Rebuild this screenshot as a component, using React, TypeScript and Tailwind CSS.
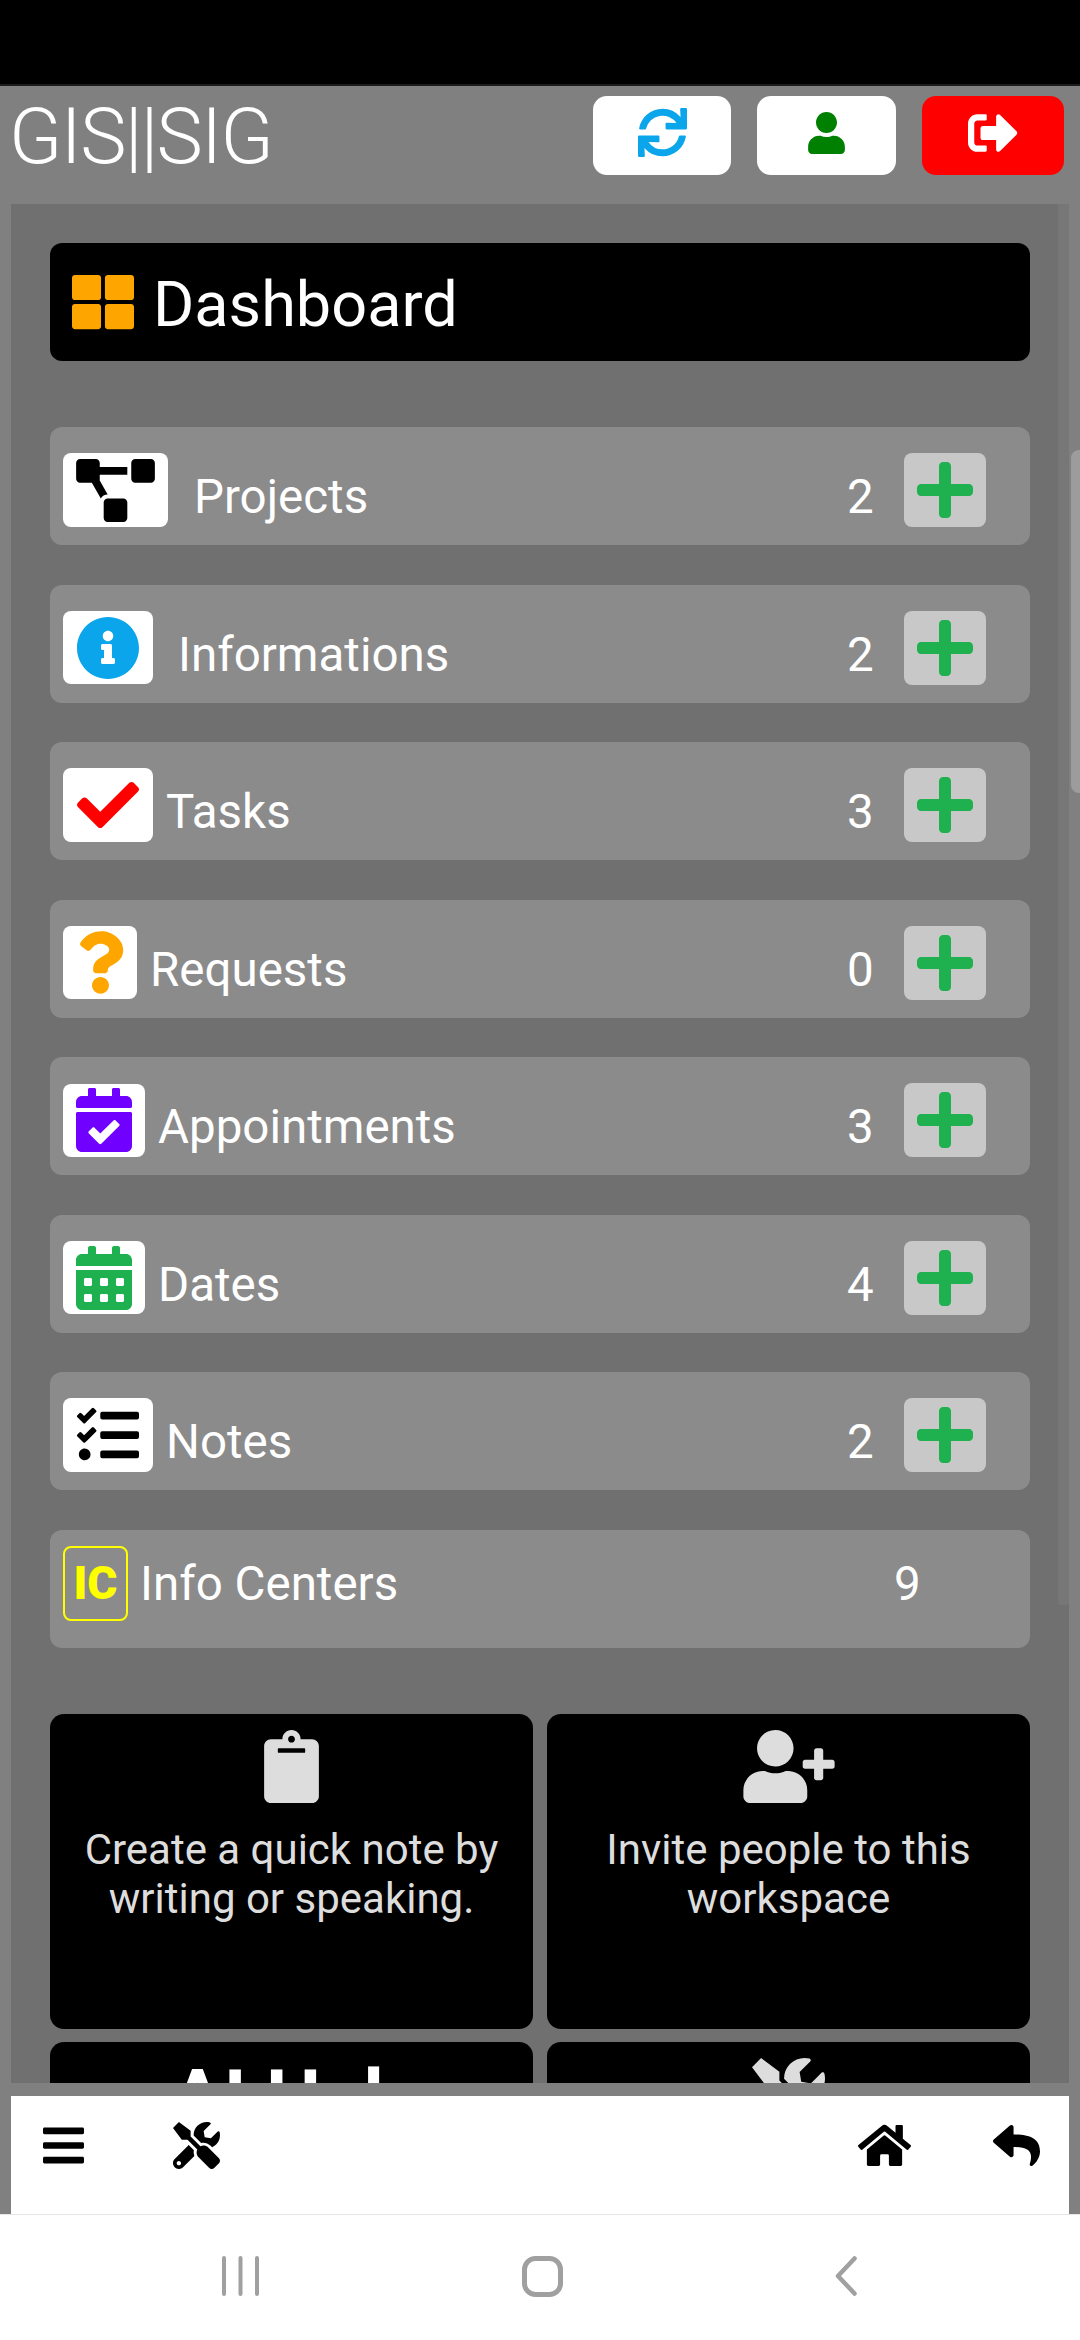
import type { ReactNode } from "react";
import {
  FaBars,
  FaCalendarAlt,
  FaCalendarCheck,
  FaCheck,
  FaClipboard,
  FaHome,
  FaInfoCircle,
  FaPlus,
  FaProjectDiagram,
  FaQuestion,
  FaReply,
  FaSignOutAlt,
  FaSync,
  FaTasks,
  FaThLarge,
  FaTools,
  FaUser,
  FaUserPlus,
} from "react-icons/fa";

interface Section {
  name: string;
  count: number;
  icon: ReactNode;
  tile: string;
  label: string;
}

const sections: Section[] = [
  {
    name: "Projects",
    count: 2,
    icon: <FaProjectDiagram className="w-[79px] h-[63px] text-black" />,
    tile: "w-[105px] h-[74px]",
    label: "ml-[26px]",
  },
  {
    name: "Informations",
    count: 2,
    icon: <FaInfoCircle className="w-[64px] h-[64px] text-[#0ba5ec]" />,
    tile: "w-[90px] h-[73px]",
    label: "ml-[25px]",
  },
  {
    name: "Tasks",
    count: 3,
    icon: <FaCheck className="w-[62px] h-[62px] text-[#ff0000]" />,
    tile: "w-[90px] h-[74px]",
    label: "ml-[13px]",
  },
  {
    name: "Requests",
    count: 0,
    icon: <FaQuestion className="w-[47px] h-[63px] text-[#ffa500]" />,
    tile: "w-[74px] h-[73px]",
    label: "ml-[13px]",
  },
  {
    name: "Appointments",
    count: 3,
    icon: <FaCalendarCheck className="w-[56px] h-[64px] text-[#7000ff]" />,
    tile: "w-[82px] h-[73px]",
    label: "ml-[13px]",
  },
  {
    name: "Dates",
    count: 4,
    icon: <FaCalendarAlt className="w-[56px] h-[64px] text-[#1fb14f]" />,
    tile: "w-[82px] h-[73px]",
    label: "ml-[13px]",
  },
  {
    name: "Notes",
    count: 2,
    icon: <FaTasks className="w-[62px] h-[62px] text-black" />,
    tile: "w-[90px] h-[74px]",
    label: "ml-[13px]",
  },
];

function SectionRow({ section }: { section: Section }) {
  return (
    <div className="flex h-[118px] items-center rounded-[12px] bg-[#8b8b8b] pl-[13px] pr-[44px] pt-[8px]">
      <div className={`flex items-center justify-center rounded-[8px] bg-white ${section.tile}`}>
        {section.icon}
      </div>
      <span className={`flex-1 pt-[14px] text-[47.5px] leading-[54px] text-white ${section.label}`}>
        {section.name}
      </span>
      <span className="w-[26px] pt-[14px] text-center text-[47.5px] leading-[54px] text-white">
        {section.count}
      </span>
      <button className="ml-[31px] flex h-[74px] w-[82px] items-center justify-center rounded-[8px] bg-[#c8c8c8]">
        <FaPlus className="h-[64px] w-[56px] text-[#1fb14f]" />
      </button>
    </div>
  );
}

function ActionCard({ icon, children }: { icon: ReactNode; children: ReactNode }) {
  return (
    <div className="flex h-[315px] flex-col items-center rounded-[14px] bg-black pt-[16px] text-center text-[#dddddd]">
      {icon}
      <p className="mt-[22px] px-[30px] text-[42px] leading-[49px]">{children}</p>
    </div>
  );
}

export default function App() {
  return (
    <div className="flex h-[2340px] w-[1080px] flex-col overflow-hidden bg-[#808080] font-['Roboto',sans-serif]">
      {/* status bar */}
      <div className="h-[86px] shrink-0 border-b-2 border-[#1c1c1c] bg-black" />

      <header className="flex h-[118px] shrink-0 items-start justify-between pl-[9px] pr-[16px] pt-[10px]">
        <h1 className="mt-[-9px] text-[78px] font-[350] leading-[100px] tracking-[-1.5px] text-white">GIS||SIG</h1>
        <div className="flex gap-[26px]">
          <button className="flex h-[79px] w-[138px] items-center justify-center rounded-[14px] bg-white pb-[6px]">
            <FaSync className="h-[49px] w-[49px] text-[#0ba5ec]" />
          </button>
          <button className="flex h-[79px] w-[139px] items-center justify-center rounded-[14px] bg-white pb-[5px]">
            <FaUser className="h-[42px] w-[37px] text-[#008000]" />
          </button>
          <button className="flex h-[79px] w-[142px] items-center justify-center rounded-[14px] bg-[#ff0000] pb-[6px]">
            <FaSignOutAlt className="h-[50px] w-[50px] text-white" />
          </button>
        </div>
      </header>

      <div className="relative mx-[11px] h-[1879px] shrink-0 overflow-hidden bg-[#707070]">
        <div className="flex flex-col pl-[39px] pt-[39px] w-[1019px]">
          <div className="flex h-[118px] items-center rounded-[12px] bg-black pl-[22px]">
            <FaThLarge className="h-[62px] w-[62px] text-[#ffa500]" />
            <span className="ml-[19px] pt-[5px] text-[63px] leading-[72px] text-white">Dashboard</span>
          </div>

          <div className="mt-[66px] flex flex-col gap-[39.5px]">
            {sections.map((section) => (
              <SectionRow key={section.name} section={section} />
            ))}
            <div className="flex h-[118px] items-center rounded-[12px] bg-[#8b8b8b] pb-[10px] pl-[13px] pr-[110px]">
              <div className="flex h-[75px] w-[65px] items-center justify-center rounded-[8px] border-2 border-[#ffff00] text-[46px] font-black text-[#ffff00]">
                IC
              </div>
              <span className="ml-[12px] flex-1 text-[47.5px] leading-[54px] text-white">Info Centers</span>
              <span className="w-[26px] text-center text-[47.5px] leading-[54px] text-white">9</span>
            </div>
          </div>

          <div className="mt-[66px] grid grid-cols-2 gap-x-[14px] gap-y-[13px]">
            <ActionCard icon={<FaClipboard className="h-[73px] w-[55px]" />}>
              Create a quick note by writing or speaking.
            </ActionCard>
            <ActionCard icon={<FaUserPlus className="h-[73px] w-[92px]" />}>
              Invite people to this workspace
            </ActionCard>
            <div className="flex h-[315px] justify-center rounded-[14px] bg-black pl-[16px] pt-[12px] text-[78px] font-bold leading-[90px] text-white">
              AI Help
            </div>
            <div className="flex h-[315px] justify-center rounded-[14px] bg-black pt-[16px] text-[#dddddd]">
              <FaTools className="h-[73px] w-[73px]" />
            </div>
          </div>
        </div>

        {/* inner scroll indicator */}
        <div className="absolute right-0 top-0 h-[1401px] w-[11px] rounded-b-[3px] bg-[#777777]" />
      </div>

      {/* outer scroll indicator */}
      <div className="absolute left-[1071px] top-[450px] h-[343px] w-[9px] rounded-l-[8px] bg-[#9c9c9c]" />

      <footer className="mx-[11px] mt-[13px] flex h-[118px] shrink-0 items-start justify-between bg-white pl-[32px] pr-[29px] pt-[26px] text-black">
        <div className="flex gap-[89px]">
          <FaBars className="h-[47px] w-[41px]" />
          <FaTools className="h-[47px] w-[47px]" />
        </div>
        <div className="flex gap-[82px]">
          <FaHome className="h-[47px] w-[53px]" />
          <FaReply className="h-[47px] w-[47px]" />
        </div>
      </footer>

      {/* android navigation bar */}
      <nav className="flex h-[126px] shrink-0 items-start border-t border-[#e6e6e6] bg-white pl-[222px] pt-[41px]">
        <svg width="37" height="40" viewBox="0 0 37 40" fill="none" stroke="#a0a0a0" strokeWidth="4" strokeLinecap="round">
          <path d="M2 2v36M18.500 2v36M35 2v36" />
        </svg>
        <svg className="ml-[263px]" width="41" height="41" viewBox="0 0 41 41" fill="none" stroke="#a0a0a0" strokeWidth="5">
          <rect x="2.500" y="2.500" width="36" height="36" rx="11" />
        </svg>
        <svg className="ml-[272px]" width="22" height="40" viewBox="0 0 22 40" fill="none" stroke="#a0a0a0" strokeWidth="4.500" strokeLinecap="round" strokeLinejoin="round">
          <path d="M19.500 2.500 3 20l16.500 17.500" />
        </svg>
      </nav>
    </div>
  );
}
